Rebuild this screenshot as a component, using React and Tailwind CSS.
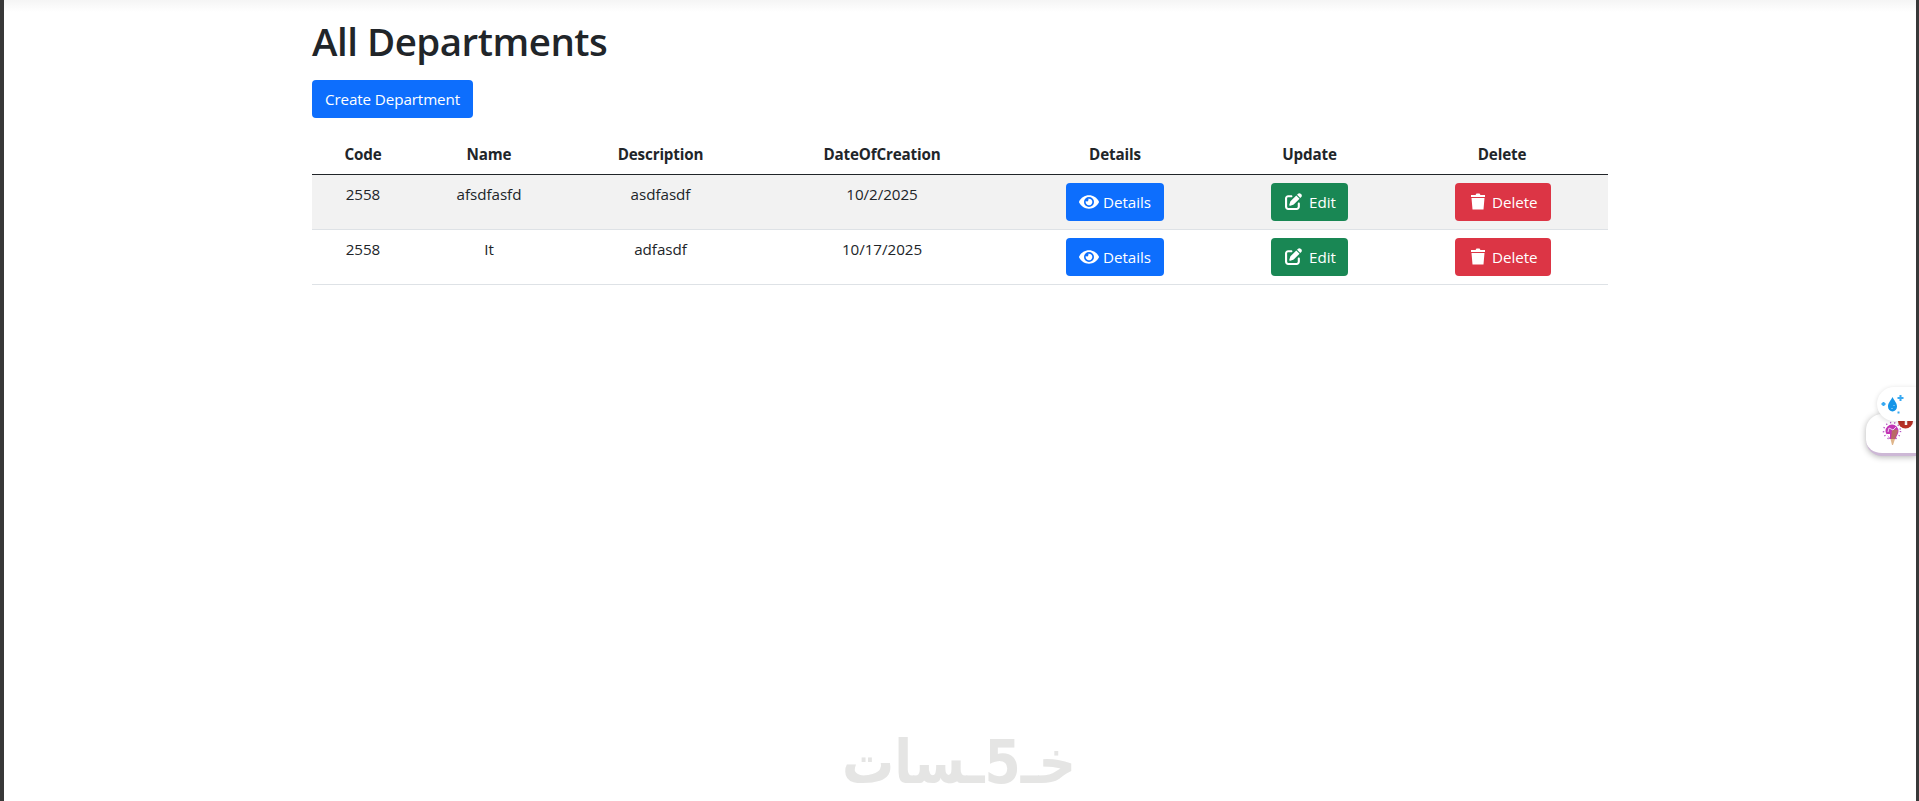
import { FaEye } from 'react-icons/fa';
import { FaPenToSquare } from 'react-icons/fa6';

const columns = [
  { label: 'Code', width: 'w-[102px]' },
  { label: 'Name', width: 'w-[150px]' },
  { label: 'Description', width: 'w-[193px]' },
  { label: 'DateOfCreation', width: 'w-[250px]' },
  { label: 'Details', width: 'w-[216px]' },
  { label: 'Update', width: 'w-[173px]' },
  { label: 'Delete', width: 'w-[212px]' },
];

const departments = [
  { id: 1, code: '2558', name: 'afsdfasfd', description: 'asdfasdf', date: '10/2/2025' },
  { id: 2, code: '2558', name: 'It', description: 'adfasdf', date: '10/17/2025' },
];

const App = () => {
  return (
    <div className="relative h-[801px] overflow-hidden border-l-4 border-r-[3px] border-[#383838] bg-white font-['Open_Sans','Noto_Sans',sans-serif] text-[15.2px] leading-6 tracking-[-0.05px] text-[#212529]">
      {/* Shadow of the navbar above */}
      <div className="h-3 bg-gradient-to-b from-[#f5f5f5] to-white" />

      <main className="mx-auto w-[1320px] px-3 pt-[2px]">
        <h1 className="mb-3 text-[38.5px] font-semibold leading-[54px] tracking-[-0.5px]">All Departments</h1>
        <button className="block h-[38px] w-[161px] whitespace-nowrap rounded bg-[#0d6efd] text-center tracking-[-0.1px] text-white">
          Create Department
        </button>

        {/* Departments Table */}
        <table className="mt-4 w-full table-fixed border-collapse text-center">
          <thead>
            <tr className="h-[40px] border-b border-[#212529]">
              {columns.map((column) => (
                <th key={column.label} className={`${column.width} p-0 font-bold tracking-[-0.15px]`}>
                  {column.label}
                </th>
              ))}
            </tr>
          </thead>
          <tbody>
            {departments.map((department) => (
              <DepartmentRow key={department.id} department={department} />
            ))}
          </tbody>
        </table>
      </main>

      <Watermark />
      <FloatingWidgets />
    </div>
  );
};

// Table Row Component
const DepartmentRow = ({ department }) => {
  return (
    <tr className="h-[55px] border-b border-[#dee2e6] align-top odd:bg-[#f2f2f2]">
      <td className="pt-[7px]">{department.code}</td>
      <td className="pt-[7px]">{department.name}</td>
      <td className="pt-[7px]">{department.description}</td>
      <td className="pt-[7px]">{department.date}</td>
      <td className="pt-2">
        <button className="inline-flex h-[38px] w-[98px] items-center rounded bg-[#0d6efd] pl-[13px] text-white">
          <FaEye className="mr-[4px] h-[18px] w-[20px]" />
          Details
        </button>
      </td>
      <td className="pt-2">
        <button className="inline-flex h-[38px] w-[77px] items-center rounded bg-[#198754] pl-[14px] text-white">
          <FaPenToSquare className="mr-[7px] size-[17px]" />
          Edit
        </button>
      </td>
      <td className="pl-0.5 pt-2">
        <button className="inline-flex h-[38px] w-[96px] items-center rounded bg-[#dc3545] pl-[15px] text-white">
          <svg className="mr-[6px] h-[17px] w-[16px]" viewBox="0 0 16 17" fill="#fff">
            <path d="M1 2h4.500L6.500.5h3l1 1.500H15v2H1zM1.500 5h13l-1 11.500h-11z" />
          </svg>
          Delete
        </button>
      </td>
    </tr>
  );
};

const Watermark = () => {
  return (
    <svg
      className="absolute left-[832px] top-[700px] h-[101px] w-[248px] font-['DejaVu_Sans',sans-serif] font-bold tracking-normal"
      viewBox="836 700 248 101"
      fill="#e5e5e4"
    >
      <text x="959" y="783" direction="rtl" textAnchor="middle" fontSize="60" textLength="234" lengthAdjust="spacingAndGlyphs">
        خـ5ـسات
      </text>
    </svg>
  );
};

// Browser extension buttons on the right edge
const FloatingWidgets = () => {
  return (
    <div className="absolute right-0 top-[387px] h-[70px] w-[50px]">
      <div className="absolute right-0 top-[27px] h-[42px] w-[50px] rounded-l-[16px] border-b-[3px] border-[#cdb8d6] bg-white shadow-[0_1px_6px_rgba(0,0,0,0.3)]" />
      <svg className="absolute right-[3px] top-[32px] h-[32px] w-[32px]" viewBox="0 0 32 32">
        <circle cx="24.500" cy="2" r="7.500" fill="#b93127" />
        <path d="M25 1v5" stroke="#fff" strokeWidth="2.5" />
        <circle cx="11" cy="12" r="8.500" fill="none" stroke="#b454c4" strokeWidth="1.5" strokeDasharray="1.2 3" />
        <path d="M4.500 12a6.500 6.500 0 1 1 13 0c0 3-2 4.500-3 8h-6c-1-3.500-4-5-4-8" fill="#c235b5" />
        <path d="M5 15h4v4z" fill="#fff" />
        <path d="M11 10l6 1c0 3-2 5-3 9h-4z" fill="#b96a67" />
        <path d="m7 13 1-4 4 2 3-3" fill="none" stroke="#ead4ed" />
        <path d="M9.500 20h4.500l-2 6h-1z" fill="#dfb58a" />
      </svg>
      <div className="absolute right-0 top-0 h-[34px] w-[39px] rounded-l-full bg-white shadow-[0_1px_5px_rgba(0,0,0,0.15)]" />
      <svg className="absolute right-[9px] top-[6px] h-[22px] w-[26px]" viewBox="0 0 26 22">
        <path d="M11.500 4c2 4 4.500 6 4.500 9.500a4.500 5 0 0 1-9 0C7 10 9.500 8 11.500 4" fill="#1595e8" />
        <path d="M19.500 2v6M16.500 5h6M2.500 9v4M.5 11h4M17.500 18.500v2M16.500 19.500h2" stroke="#39a9f2" strokeWidth="2" />
        <path d="M13 12v1M11 15v1" stroke="#b8e3ff" />
      </svg>
    </div>
  );
};

export default App;
